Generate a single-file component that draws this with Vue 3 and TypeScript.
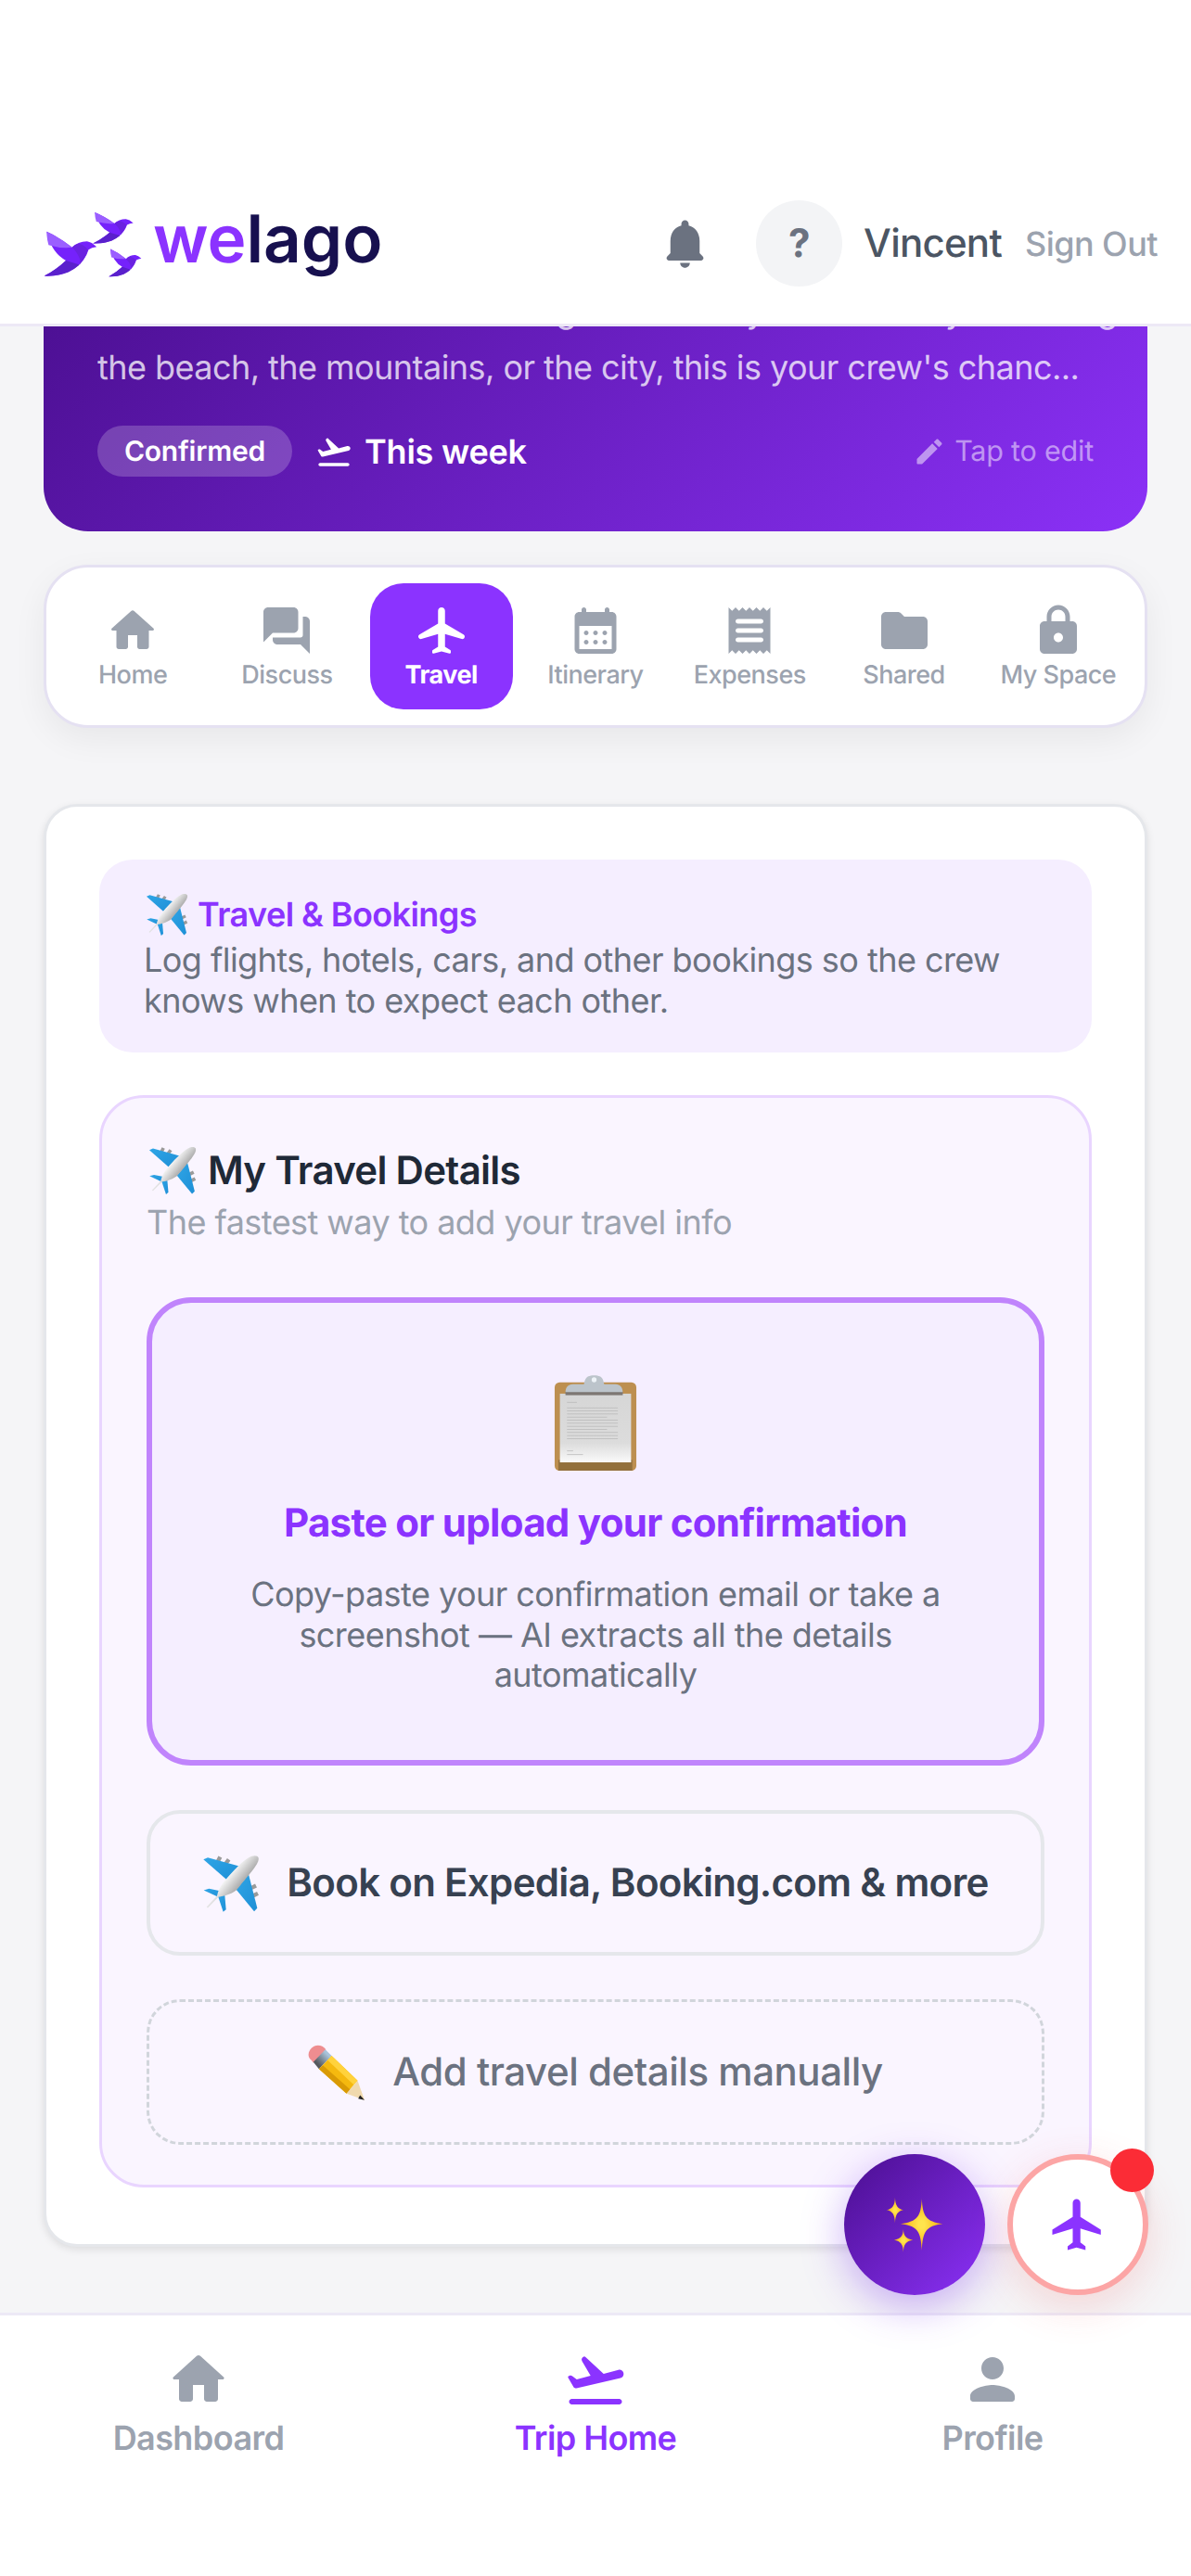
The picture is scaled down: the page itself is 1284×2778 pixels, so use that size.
<template>
  <div class="app">
    <!-- Shared emoji artwork -->
    <svg class="defs" width="0" height="0" aria-hidden="true">
      <defs>
        <linearGradient id="silver" x1="0.2" y1="0.1" x2="0.8" y2="0.6">
          <stop offset="0" stop-color="#c4c4c4" />
          <stop offset="0.45" stop-color="#f6f6f6" />
          <stop offset="1" stop-color="#8a8a8a" />
        </linearGradient>
        <linearGradient id="wing" x1="0" y1="0" x2="1" y2="1">
          <stop offset="0" stop-color="#2fa5e6" />
          <stop offset="1" stop-color="#1e8fd6" />
        </linearGradient>
        <linearGradient id="paper" x1="0" y1="0" x2="0" y2="1">
          <stop offset="0" stop-color="#d6d6d6" />
          <stop offset="0.72" stop-color="#dcdcdc" />
          <stop offset="1" stop-color="#fafafa" />
        </linearGradient>
        <linearGradient id="ferrule" x1="0" y1="1" x2="1" y2="0">
          <stop offset="0.25" stop-color="#55585c" />
          <stop offset="0.75" stop-color="#a9c3da" />
        </linearGradient>
        <radialGradient id="star">
          <stop offset="0.15" stop-color="#ffe44d" />
          <stop offset="0.7" stop-color="#fbbf24" />
          <stop offset="1" stop-color="#f59e0b" />
        </radialGradient>
        <symbol id="plane-emoji" viewBox="40 35 186 185">
          <g stroke="#9a9a9a" stroke-width="13">
            <path d="M90 58L98 42M116 64L126 50M198 143L214 135M204 168L220 160" />
          </g>
          <path d="M44 50L58 44L160 72L118 115Z" fill="url(#wing)" />
          <path d="M190 98L218 208L208 218L150 148Z" fill="url(#wing)" />
          <path d="M45 150L62 145L112 155L92 172Z" fill="url(#wing)" />
          <path d="M92 172L112 155L117 212L108 220Z" fill="url(#wing)" />
          <path d="M222 45C225 62 205 85 150 150C130 165 105 170 92 172L58 207L54 204L88 168C92 150 100 135 110 122C155 70 180 48 200 40C210 37 220 38 222 45Z" fill="url(#silver)" />
        </symbol>
      </defs>
    </svg>

    <!-- Header -->
    <header class="top-bar">
      <div class="logo">
        <svg class="logo-birds" viewBox="50 85 320 212" aria-hidden="true">
          <g id="bird">
            <path d="M60 147Q100 165 142 198Q160 178 190 178Q205 180 221 196Q205 198 195 205Q185 240 150 265Q110 292 52 290Q90 270 122 240Q75 215 60 147Z" fill="#7522fb" />
            <path d="M60 147Q100 165 142 198Q105 202 66 190Q60 170 60 147Z" fill="#9b5fff" />
            <path d="M52 290Q90 270 122 240L166 254Q150 268 130 278Q95 292 52 290Z" fill="#5a20cc" />
            <path d="M142 198Q158 212 168 238L166 254Q186 230 193 205Q180 190 165 186Q150 188 142 198Z" fill="#6a22e0" />
          </g>
          <use href="#bird" transform="translate(169 -18) scale(.77 .7)" />
          <use href="#bird" transform="translate(228 112) scale(.62)" />
        </svg>
        <span class="logo-text"><span class="logo-we">we</span><span class="logo-lago">lago</span></span>
      </div>
      <div class="top-actions">
        <svg class="bell" viewBox="0 0 24 24"><path :d="icons.bell" /></svg>
        <div class="avatar">?</div>
        <span class="user-name">Vincent</span>
        <span class="sign-out">Sign Out</span>
      </div>
    </header>

    <!-- Scrolled content -->
    <main class="content">
      <section class="hero">
        <p class="hero-text">
          <span>The time has come to make big memories you and every one will go</span>
          <span>the beach, the mountains, or the city, this is your crew's chanc...</span>
        </p>
        <div class="hero-meta">
          <span class="badge">Confirmed</span>
          <svg class="hero-plane" viewBox="0 0 24 24"><path :d="icons.takeoff" /></svg>
          <span class="hero-date">This week</span>
          <span class="tap-edit">
            <svg viewBox="0 0 24 24"><path :d="icons.edit" /></svg>
            Tap to edit
          </span>
        </div>
      </section>

      <nav class="tabs">
        <button v-for="tab in tabs" :key="tab.label" class="tab" :class="{ active: tab.active }">
          <svg viewBox="0 0 24 24"><path :d="tab.icon" /></svg>
          <span>{{ tab.label }}</span>
        </button>
      </nav>

      <section class="panel">
        <div class="intro">
          <div class="intro-title">
            <svg class="emoji-sm"><use href="#plane-emoji" /></svg>
            Travel &amp; Bookings
          </div>
          <p>Log flights, hotels, cars, and other bookings so the crew knows when to expect each other.</p>
        </div>

        <div class="details">
          <h2>
            <svg class="emoji-md"><use href="#plane-emoji" /></svg>
            My Travel Details
          </h2>
          <p class="details-sub">The fastest way to add your travel info</p>

          <div class="upload">
            <svg class="clipboard" viewBox="80 65 265 310" aria-hidden="true">
              <rect x="80" y="88" width="265" height="287" rx="16" fill="#bd8f50" />
              <rect x="92" y="340" width="240" height="35" fill="#93703c" />
              <rect x="97" y="125" width="231" height="223" fill="url(#paper)" />
              <rect x="115" y="118" width="186" height="12" fill="#7d7773" />
              <path d="M115 120c0-14 8-26 24-26h36c4-8 0-28 33-28s29 20 33 28h36c16 0 24 12 24 26z" fill="#bcc4cb" />
              <circle cx="208" cy="80" r="8" fill="#eef3f8" />
              <g fill="#b4b4b4">
                <rect x="120" y="152" width="32" height="2" />
                <rect v-for="i in 11" :key="i" x="120" :y="160 + i * 10" :width="i % 4 === 0 ? 130 : 165" height="2" />
                <rect x="120" y="310" width="20" height="2" />
                <rect x="120" y="322" width="52" height="2" />
              </g>
            </svg>
            <div class="upload-title">Paste or upload your confirmation</div>
            <p>Copy-paste your confirmation email or take a screenshot — AI extracts all the details automatically</p>
          </div>

          <button class="action book">
            <svg class="emoji-lg"><use href="#plane-emoji" /></svg>
            Book on Expedia, Booking.com &amp; more
          </button>

          <button class="action manual">
            <svg class="emoji-lg" viewBox="33 20 182 182" aria-hidden="true">
              <path d="M44 72C28 60 34 38 52 28C66 22 80 26 90 38L50 80Z" fill="#ee8d90" />
              <path d="M50 78L88 38L108 58L68 100Z" fill="url(#ferrule)" />
              <path d="M68 100L108 58L190 137L155 178Z" fill="#f5b90f" />
              <path d="M108 58L190 137L178 150L95 72Z" fill="#ffd23c" />
              <path d="M68 100L80 88L167 165L155 178Z" fill="#d99a05" />
              <path d="M155 178L190 137L212 198Z" fill="#f0d9ae" />
              <path d="M198 183L212 198L192 194Z" fill="#222" />
            </svg>
            Add travel details manually
          </button>
        </div>
      </section>
    </main>

    <!-- Floating actions -->
    <button class="fab fab-ai" aria-label="Assistant">
      <svg viewBox="165 178 190 182" aria-hidden="true">
        <path fill="url(#star)" d="M282 183C285 240 295 258 350 265C295 272 285 290 282 352C279 290 269 272 213 265C269 258 279 240 282 183Z" />
        <path fill="url(#star)" d="M195 180C196 205 203 216 222 220C203 224 196 235 195 262C194 235 187 224 168 220C187 216 194 205 195 180Z" />
        <path fill="url(#star)" d="M222 282C223 305 230 314 253 318C230 322 223 331 222 357C221 331 214 322 192 318C214 314 221 305 222 282Z" />
      </svg>
    </button>
    <button class="fab fab-travel" aria-label="Travel">
      <svg viewBox="0 0 24 24"><path :d="icons.flightSharp" /></svg>
      <span class="fab-dot"></span>
    </button>

    <!-- Bottom nav -->
    <footer class="bottom-nav">
      <div v-for="item in navItems" :key="item.label" class="nav-item" :class="{ active: item.active }">
        <svg viewBox="0 0 24 24"><path :d="item.icon" /></svg>
        <span>{{ item.label }}</span>
      </div>
    </footer>
  </div>
</template>

<script setup lang="ts">
interface TabItem {
  label: string
  icon: string
  active?: boolean
}

const icons = {
  home: 'M10 19v-5h4v5c0 .55.45 1 1 1h3c.55 0 1-.45 1-1v-7h1.700c.46 0 .68-.57.33-.87L12.670 3.600c-.38-.34-.96-.34-1.340 0l-8.360 7.530c-.34.3-.13.87.33.87H5v7c0 .55.45 1 1 1h3c.55 0 1-.45 1-1z',
  forum: 'M20 6h-1v8c0 .55-.45 1-1 1H6v1c0 1.100.9 2 2 2h10l4 4V8c0-1.100-.9-2-2-2zm-3 5V4c0-1.100-.9-2-2-2H4c-1.100 0-2 .9-2 2v13l4-4h9c1.100 0 2-.9 2-2z',
  flight: 'M21.480 13.700L13.500 9V3.500C13.500 2.670 12.830 2 12 2s-1.500.67-1.500 1.500V9l-7.980 4.700c-.32.18-.52.53-.52.9 0 .7.67 1.200 1.340 1.010l7.160-2.110V19l-2.260 1.350c-.15.09-.24.26-.24.43v.58c0 .33.31.57.62.49L12 21l3.380.85c.32.08.62-.16.62-.49v-.58c0-.18-.09-.34-.24-.43L13.500 19v-5.500l7.160 2.110c.67.2 1.340-.3 1.340-1.010 0-.37-.2-.72-.52-.9z',
  flightSharp: 'M21 16v-2l-8-5V3.500c0-.83-.67-1.500-1.500-1.500S10 2.670 10 3.500V9l-8 5v2l8-2.500V19l-2 1.500V22l3.500-1 3.500 1v-1.500L13 19v-5.500l8 2.500z',
  calendar: 'M17 2c-.55 0-1 .45-1 1v1H8V3c0-.55-.45-1-1-1s-1 .45-1 1v1H5c-1.110 0-1.990.9-1.990 2L3 20c0 1.100.89 2 2 2h14c1.100 0 2-.9 2-2V6c0-1.100-.9-2-2-2h-1V3c0-.55-.45-1-1-1zm2 18H5V10h14v10zm-8-7c0-.55.45-1 1-1s1 .45 1 1-.45 1-1 1-1-.45-1-1zm-4 0c0-.55.45-1 1-1s1 .45 1 1-.45 1-1 1-1-.45-1-1zm8 0c0-.55.45-1 1-1s1 .45 1 1-.45 1-1 1-1-.45-1-1zm-4 4c0-.55.45-1 1-1s1 .45 1 1-.45 1-1 1-1-.45-1-1zm-4 0c0-.55.45-1 1-1s1 .45 1 1-.45 1-1 1-1-.45-1-1zm8 0c0-.55.45-1 1-1s1 .45 1 1-.45 1-1 1-1-.45-1-1z',
  receipt: 'M19.500 3.500L18 2l-1.500 1.500L15 2l-1.500 1.500L12 2l-1.500 1.500L9 2 7.500 3.500 6 2 4.500 3.500 3 2v20l1.500-1.500L6 22l1.500-1.500L9 22l1.500-1.500L12 22l1.500-1.500L15 22l1.500-1.500L18 22l1.500-1.500L21 22V2l-1.500 1.500zM17 17H7c-.55 0-1-.45-1-1s.45-1 1-1h10c.55 0 1 .45 1 1s-.45 1-1 1zm0-4H7c-.55 0-1-.45-1-1s.45-1 1-1h10c.55 0 1 .45 1 1s-.45 1-1 1zm0-4H7c-.55 0-1-.45-1-1s.45-1 1-1h10c.55 0 1 .45 1 1s-.45 1-1 1z',
  folder: 'M10.590 4.590C10.210 4.210 9.700 4 9.170 4H4c-1.100 0-1.990.9-1.990 2L2 18c0 1.100.9 2 2 2h16c1.100 0 2-.9 2-2V8c0-1.100-.9-2-2-2h-8l-1.410-1.410z',
  lock: 'M18 8h-1V6c0-2.760-2.240-5-5-5S7 3.240 7 6v2H6c-1.100 0-2 .9-2 2v10c0 1.100.9 2 2 2h12c1.100 0 2-.9 2-2V10c0-1.100-.9-2-2-2zm-6 9c-1.100 0-2-.9-2-2s.9-2 2-2 2 .9 2 2-.9 2-2 2zM9 8V6c0-1.660 1.340-3 3-3s3 1.340 3 3v2H9z',
  takeoff: 'M20.500 19h-17c-.55 0-1 .45-1 1s.45 1 1 1h17c.55 0 1-.45 1-1s-.45-1-1-1zM22.070 9.640c-.22-.8-1.040-1.270-1.840-1.060L14.920 10 8.450 3.970c-.18-.17-.43-.23-.66-.16-.68.18-.99.97-.63 1.570l3.070 5.320-4.970 1.330-1.570-1.230c-.25-.19-.57-.26-.87-.18l-.33.09c-.32.08-.47.45-.3.73l1.880 3.250c.23.39.69.58 1.120.47L21 11.490c.8-.22 1.280-1.040 1.070-1.850z',
  person: 'M12 12c2.210 0 4-1.790 4-4s-1.790-4-4-4-4 1.790-4 4 1.790 4 4 4zm0 2c-2.670 0-8 1.340-8 4v1c0 .55.45 1 1 1h14c.55 0 1-.45 1-1v-1c0-2.660-5.330-4-8-4z',
  bell: 'M12 22c1.100 0 2-.9 2-2h-4c0 1.100.9 2 2 2zm6-6v-5c0-3.070-1.630-5.640-4.500-6.320V4c0-.83-.67-1.500-1.500-1.500s-1.500.67-1.500 1.500v.68C7.640 5.360 6 7.920 6 11v5l-1.290 1.290c-.63.63-.19 1.710.7 1.710h13.170c.89 0 1.340-1.080.71-1.710L18 16z',
  edit: 'M3 17.460v3.040c0 .28.22.5.5.5h3.040c.13 0 .26-.05.35-.15L17.810 9.940l-3.750-3.750L3.150 17.100c-.1.1-.15.22-.15.36zM20.710 7.040c.39-.39.39-1.020 0-1.410l-2.340-2.340c-.39-.39-1.020-.39-1.410 0l-1.830 1.830 3.750 3.750 1.830-1.830z'
}

const tabs: TabItem[] = [
  { label: 'Home', icon: icons.home },
  { label: 'Discuss', icon: icons.forum },
  { label: 'Travel', icon: icons.flight, active: true },
  { label: 'Itinerary', icon: icons.calendar },
  { label: 'Expenses', icon: icons.receipt },
  { label: 'Shared', icon: icons.folder },
  { label: 'My Space', icon: icons.lock }
]

const navItems: TabItem[] = [
  { label: 'Dashboard', icon: icons.home },
  { label: 'Trip Home', icon: icons.takeoff, active: true },
  { label: 'Profile', icon: icons.person }
]
</script>

<style scoped>
.app {
  position: relative;
  display: flex;
  flex-direction: column;
  height: 2778px;
  overflow: hidden;
  background: #f5f5f7;
  font-family: Inter, "Noto Sans", sans-serif;
  text-rendering: geometricPrecision;
  letter-spacing: -0.0133em;
  color: #1f2937;
}

.defs {
  position: absolute;
}

/* Header */
.top-bar {
  position: relative;
  z-index: 2;
  flex: none;
  box-sizing: border-box;
  height: 352px;
  padding: 176px 36px 0 47px;
  display: flex;
  align-items: center;
  justify-content: space-between;
  background: #fff;
  border-bottom: 3px solid #ede9f6;
}

.logo {
  display: flex;
  align-items: center;
  gap: 11px;
}

.logo-birds {
  width: 107px;
  height: 71px;
  margin-top: 4px;
}

.logo-text {
  font-size: 71px;
  font-weight: 600;
  line-height: 1;
  letter-spacing: 0;
  margin-top: -8px;
}

.logo-we {
  color: #8b33ff;
}

.logo-lago {
  color: #17104f;
}

.top-actions {
  display: flex;
  align-items: center;
}

.bell {
  width: 63px;
  height: 63px;
  fill: #6b7280;
  margin-right: 45px;
}

.avatar {
  width: 93px;
  height: 93px;
  border-radius: 50%;
  background: #f3f4f6;
  display: flex;
  align-items: center;
  justify-content: center;
  color: #6b7280;
  font-size: 42px;
  font-weight: 700;
  margin-right: 23px;
}

.user-name {
  font-size: 42px;
  font-weight: 500;
  letter-spacing: -0.018em;
  color: #4b5563;
  margin-right: 25px;
}

.sign-out {
  font-size: 36px;
  font-weight: 500;
  letter-spacing: -0.015em;
  color: #9ca3af;
}

/* Main column */
.content {
  flex: 1;
  min-height: 0;
  overflow: hidden;
  box-sizing: border-box;
  padding: 0 47px;
}

.hero {
  margin-top: -75px;
  padding: 28px 58px 59px;
  border-radius: 0 0 48px 48px;
  background: linear-gradient(135deg, #4a0e8f 0%, #8b31f7 100%);
}

.hero-text {
  margin: 0 0 32px;
  font-size: 36px;
  line-height: 61px;
  letter-spacing: -0.0152em;
  color: rgba(255, 255, 255, 0.75);
}

.hero-text span {
  display: block;
  white-space: nowrap;
}

.hero-meta {
  display: flex;
  align-items: center;
  height: 55px;
}

.badge {
  box-sizing: border-box;
  height: 55px;
  width: 210px;
  border-radius: 28px;
  background: rgba(255, 255, 255, 0.2);
  color: #fff;
  font-size: 30px;
  font-weight: 600;
  display: flex;
  align-items: center;
  justify-content: center;
}

.hero-plane {
  width: 42px;
  height: 42px;
  fill: #fff;
  margin-left: 24px;
  margin-right: 12px;
}

.hero-date {
  font-size: 36px;
  font-weight: 600;
  color: #fff;
}

.tap-edit {
  margin-left: auto;
  display: flex;
  align-items: center;
  gap: 9px;
  font-size: 30.500px;
  color: rgba(255, 255, 255, 0.5);
}

.tap-edit svg {
  width: 36px;
  height: 36px;
  fill: currentColor;
}

/* Tab card */
.tabs {
  margin: 36px 0 0;
  box-sizing: border-box;
  height: 176px;
  padding: 17px 16px;
  display: grid;
  grid-template-columns: repeat(7, 1fr);
  gap: 12px;
  background: #fff;
  border: 3px solid #e5e1f2;
  border-radius: 48px;
  box-shadow: 0 12px 36px rgba(0, 0, 0, 0.06);
}

.tab {
  border: 0;
  padding: 0;
  background: transparent;
  border-radius: 36px;
  color: #9ca3af;
  font-family: inherit;
  text-rendering: inherit;
  letter-spacing: -0.019em;
  font-size: 27px;
  font-weight: 500;
  display: flex;
  flex-direction: column;
  align-items: center;
  justify-content: center;
  gap: 1px;
  white-space: nowrap;
}

.tab svg {
  width: 60px;
  height: 60px;
  fill: currentColor;
}

.tab.active {
  background: #8b33ff;
  color: #fff;
  font-weight: 700;
}

/* Travel panel */
.panel {
  margin-top: 82px;
  box-sizing: border-box;
  height: 1556px;
  padding: 57px;
  background: #fff;
  border: 3px solid #e5e7eb;
  border-radius: 36px;
  box-shadow: 0 3px 9px rgba(0, 0, 0, 0.1);
}

.intro {
  box-sizing: border-box;
  height: 208px;
  padding: 36px 48px;
  border-radius: 36px;
  background: #f5eeff;
}

.intro-title {
  display: flex;
  align-items: center;
  gap: 10px;
  height: 46px;
  margin-bottom: 5px;
  font-size: 36px;
  font-weight: 600;
  letter-spacing: -0.016em;
  color: #8b33ff;
}

.intro p {
  margin: 0;
  font-size: 36px;
  line-height: 43.500px;
  letter-spacing: -0.0152em;
  color: #6b7280;
}

.emoji-sm {
  width: 46px;
  height: 46px;
  margin-left: 2px;
}

.emoji-md {
  width: 56px;
  height: 52px;
}

.emoji-lg {
  width: 62px;
  height: 62px;
}

.details {
  margin-top: 46px;
  box-sizing: border-box;
  height: 1178px;
  padding: 48px;
  border: 3px solid #e9d5ff;
  border-radius: 48px;
  background: #faf5ff;
}

.details h2 {
  margin: 0;
  height: 60px;
  display: flex;
  align-items: center;
  gap: 10px;
  font-size: 42px;
  font-weight: 600;
  letter-spacing: -0.017em;
  color: #1f2937;
}

.details-sub {
  margin: 1px 0 0;
  font-size: 36px;
  line-height: 50px;
  letter-spacing: -0.0152em;
  color: #9ca3af;
}

.upload {
  margin-top: 56px;
  box-sizing: border-box;
  height: 505px;
  padding: 78px 60px 0;
  border: 6px solid #c084fc;
  border-radius: 48px;
  background: #f5eeff;
  text-align: center;
}

.clipboard {
  display: block;
  width: 90px;
  height: 103px;
  margin: 0 auto;
}

.upload-title {
  margin-top: 30px;
  font-size: 42px;
  line-height: 54px;
  font-weight: 700;
  letter-spacing: -0.017em;
  color: #8b33ff;
}

.upload p {
  margin: 28px 0 0;
  font-size: 36px;
  line-height: 43.500px;
  letter-spacing: -0.0152em;
  color: #6b7280;
}

.action {
  display: flex;
  align-items: center;
  justify-content: center;
  gap: 29px;
  box-sizing: border-box;
  width: 100%;
  height: 157px;
  background: transparent;
  border-radius: 36px;
  font-family: inherit;
  text-rendering: inherit;
  letter-spacing: -0.0133em;
  font-size: 42px;
}

.book {
  margin-top: 48px;
  border: 4px solid #e5e7eb;
  color: #374151;
  font-weight: 600;
  letter-spacing: -0.016em;
}

.manual {
  margin-top: 47px;
  border: 3px dashed #d1d5db;
  color: #6b7280;
  font-weight: 500;
  letter-spacing: -0.011em;
}

/* Floating buttons */
.fab {
  position: absolute;
  z-index: 3;
  top: 2323px;
  box-sizing: border-box;
  width: 152px;
  height: 152px;
  padding: 0;
  border-radius: 50%;
  display: flex;
  align-items: center;
  justify-content: center;
}

.fab-ai {
  left: 910px;
  border: 0;
  background: linear-gradient(135deg, #4a0e8f, #8b31f7);
  box-shadow: 0 12px 45px rgba(124, 58, 237, 0.4);
}

.fab-ai svg {
  width: 63px;
  height: 61px;
}

.fab-travel {
  left: 1086px;
  border: 6px solid #fca5a5;
  background: #fff;
  box-shadow: 0 12px 45px rgba(239, 68, 68, 0.18);
}

.fab-travel svg {
  width: 66px;
  height: 66px;
  fill: #8b33ff;
}

.fab-dot {
  position: absolute;
  top: -12px;
  right: -12px;
  width: 47px;
  height: 47px;
  border-radius: 50%;
  background: #fb2c36;
}

/* Bottom navigation */
.bottom-nav {
  position: relative;
  z-index: 2;
  flex: none;
  box-sizing: border-box;
  height: 284px;
  padding: 33px 0 0;
  display: grid;
  grid-template-columns: repeat(3, 1fr);
  background: #fff;
  border-top: 3px solid #ede9f6;
}

.nav-item {
  display: flex;
  flex-direction: column;
  align-items: center;
  color: #9ca3af;
  font-size: 36px;
  font-weight: 600;
  letter-spacing: -0.016em;
  line-height: 44px;
  gap: 5px;
}

.nav-item svg {
  width: 72px;
  height: 72px;
  fill: currentColor;
}

.nav-item.active {
  color: #8b33ff;
}
</style>

<style>
html,
body {
  margin: 0;
  background: #f5f5f7;
}
</style>
